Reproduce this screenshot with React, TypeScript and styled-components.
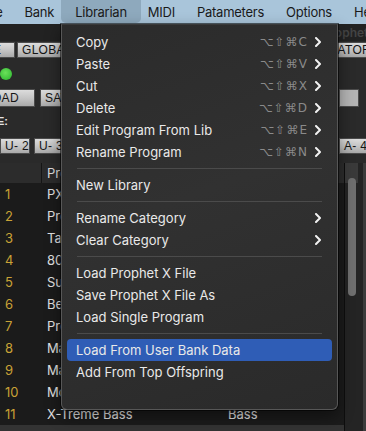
import React from "react";
import styled, { createGlobalStyle } from "styled-components";

const GlobalStyle = createGlobalStyle`
  html, body {
    margin: 0;
    padding: 0;
    background: #1b1b1b;
  }
  body {
    font-family: "Inter", "Noto Sans", "DejaVu Sans", sans-serif;
  }
`;

const Page = styled.div`
  position: relative;
  width: 366px;
  height: 431px;
  overflow: hidden;
  background: #1b1b1b;
`;

/* ---------- top menu bar ---------- */

const MenuBar = styled.div`
  display: flex;
  align-items: stretch;
  height: 24px;
  background: #a9c5da;
  white-space: nowrap;
`;

const MenuTitle = styled.div<{ $active?: boolean; $first?: boolean }>`
  display: flex;
  align-items: center;
  padding: ${(p) => (p.$active ? "0 14px" : "0 11px")};
  margin: ${(p) => (p.$active ? "0 -4px" : "0")};
  margin-left: ${(p) => (p.$first ? "-29px" : p.$active ? "-4px" : "0")};
  height: 23px;
  border-radius: 0 0 5px 5px;
  background: ${(p) => (p.$active ? "#8ea9bd" : "transparent")};
  color: #1a1a1a;
  font-size: 13px;
  letter-spacing: -0.25px;
`;

/* ---------- background editor window ---------- */

const Workspace = styled.div`
  display: flex;
  flex-direction: column;
  background: #2a2a2a;
`;

const TitleStrip = styled.div`
  height: 17px;
  display: flex;
  justify-content: flex-end;
  align-items: center;
  margin-right: -14px;
  background: #222222;
  color: #444444;
  font-size: 12px;
  font-weight: 600;
`;

const ButtonRow = styled.div<{ $h: number; $top?: number }>`
  display: flex;
  align-items: flex-start;
  gap: 2px;
  height: ${(p) => p.$h}px;
  padding-top: ${(p) => p.$top ?? 0}px;
  white-space: nowrap;
  overflow: hidden;
`;

const RightGroup = styled.div<{ $shift?: number }>`
  display: flex;
  gap: 2px;
  margin-left: auto;
  margin-right: ${(p) => p.$shift ?? 0}px;
`;

const PanelButton = styled.div<{
  $w: number;
  $h: number;
  $lead?: number;
  $flat?: boolean;
  $end?: boolean;
}>`
  flex: none;
  width: ${(p) => p.$w}px;
  height: ${(p) => p.$h}px;
  margin-left: ${(p) => p.$lead ?? 0}px;
  box-sizing: border-box;
  display: flex;
  align-items: center;
  justify-content: ${(p) => (p.$end ? "flex-end" : "flex-start")};
  padding: ${(p) => (p.$end ? "0 4px 0 0" : "0 0 0 4px")};
  border: 1px solid #4c4c4c;
  background: ${(p) =>
    p.$flat
      ? "#b4b4b4"
      : "linear-gradient(180deg, #dcdcdc 0%, #c3c3c3 55%, #a9a9a9 100%)"};
  color: #151515;
  font-family: "Liberation Sans", Arial, sans-serif;
  font-size: 12px;
  letter-spacing: 0.3px;
`;

const LedRow = styled.div`
  height: 30px;
  display: flex;
  align-items: center;
`;

const Led = styled.div`
  width: 12px;
  height: 12px;
  border-radius: 50%;
  background: radial-gradient(circle at 45% 40%, #6be05a 0%, #3cc23a 70%, #2e9e2c 100%);
`;

const FieldLabel = styled.div`
  height: 31px;
  display: flex;
  align-items: center;
  margin-left: -63px;
  padding-bottom: 4px;
  box-sizing: border-box;
  color: #e4e4e4;
  font-family: "Liberation Sans", Arial, sans-serif;
  font-size: 11px;
  font-weight: 700;
  white-space: nowrap;
`;

const TableArea = styled.div`
  margin-top: 9px;
  display: grid;
  grid-template-columns: 344px 19px 3px;
  height: 269px;
`;

const Table = styled.div`
  display: flex;
  flex-direction: column;
  background: #1b1b1b;
`;

const HeaderRow = styled.div`
  display: grid;
  grid-template-columns: 42px 186px 1fr;
  height: 20px;
  background: #2c2c2c;
  color: #dedede;
  font-size: 13px;
`;

const HeaderCell = styled.div<{ $divider?: boolean }>`
  display: flex;
  align-items: center;
  padding-left: 5px;
  border-right: ${(p) => (p.$divider ? "1px solid #151515" : "none")};
`;

const Row = styled.div`
  display: grid;
  grid-template-columns: 42px 186px 1fr;
  height: 22px;
  align-items: center;
  font-size: 13px;
  white-space: nowrap;
`;

const NumCell = styled.div`
  padding-left: 5px;
  color: #c9a236;
`;

const NameCell = styled.div`
  padding-left: 5px;
  color: #e2e2e2;
`;

const CatCell = styled.div`
  color: #e2e2e2;
`;

const BottomStrip = styled.div`
  flex: 1;
  background: #333333;
`;

const ScrollColumn = styled.div`
  display: flex;
  flex-direction: column;
  background: #242424;
  border-left: 1px solid #0e0e0e;
`;

const ScrollCorner = styled.div`
  height: 20px;
  width: 13px;
  background: #3a3a3a;
`;

const ScrollTrack = styled.div`
  flex: 1;
  padding-left: 3px;
`;

const ScrollThumb = styled.div`
  width: 8px;
  height: 118px;
  margin-top: -5px;
  border-radius: 4px;
  background: #6f6f6f;
`;

const EdgeColumn = styled.div`
  background: #3c3c3c;
`;

/* ---------- dropdown ---------- */

const Dropdown = styled.div`
  position: absolute;
  top: 24px;
  left: 61px;
  width: 277px;
  box-sizing: border-box;
  padding: 6px 5px 26px;
  border: 1px solid #575757;
  border-top-color: #3a3a3a;
  border-radius: 0 0 6px 6px;
  background: linear-gradient(160deg, #2b2b2b 0%, #313131 45%, #2a2a2a 100%);
  box-shadow: 0 0 0 1px rgba(0, 0, 0, 0.55), 0 6px 16px rgba(0, 0, 0, 0.45);
  display: flex;
  flex-direction: column;
`;

const Item = styled.div<{ $active?: boolean }>`
  height: 22px;
  display: flex;
  align-items: center;
  padding: 0 11px 0 9px;
  border-radius: 4px;
  background: ${(p) => (p.$active ? "#2f5db6" : "transparent")};
  color: #e9e9e9;
  font-size: 13px;
  white-space: nowrap;
`;

const ItemLabel = styled.span`
  flex: 1;
`;

const Shortcut = styled.span`
  color: #8a8a8a;
  font-size: 12px;
  letter-spacing: 1px;
  margin-right: 7px;
  font-family: "DejaVu Sans", "Inter", sans-serif;
`;

const Separator = styled.div`
  height: 11px;
  display: flex;
  align-items: center;
  padding: 0 10px;
  &::after {
    content: "";
    flex: 1;
    height: 1px;
    background: #4b4b4b;
  }
`;

const Chevron = () => (
  <svg width="6" height="10" viewBox="0 0 6 10">
    <polyline
      points="1,1 5,5 1,9"
      fill="none"
      stroke="#f2f2f2"
      strokeWidth="2"
      strokeLinecap="round"
      strokeLinejoin="round"
    />
  </svg>
);

type MenuEntry =
  | { sep: true }
  | { label: string; keys?: string; sub?: boolean; active?: boolean };

const entries: MenuEntry[] = [
  { label: "Copy", keys: "⌥⇧⌘C", sub: true },
  { label: "Paste", keys: "⌥⇧⌘V", sub: true },
  { label: "Cut", keys: "⌥⇧⌘X", sub: true },
  { label: "Delete", keys: "⌥⇧⌘D", sub: true },
  { label: "Edit Program From Lib", keys: "⌥⇧⌘E", sub: true },
  { label: "Rename Program", keys: "⌥⇧⌘N", sub: true },
  { sep: true },
  { label: "New Library" },
  { sep: true },
  { label: "Rename Category", sub: true },
  { label: "Clear Category", sub: true },
  { sep: true },
  { label: "Load Prophet X File" },
  { label: "Save Prophet X File As" },
  { label: "Load Single Program" },
  { sep: true },
  { label: "Load From User Bank Data", active: true },
  { label: "Add From Top Offspring" },
];

const programs = [
  ["PX Init Program", "Misc"],
  ["Prophet Strings", "Strings"],
  ["Taurus Pedals", "Bass"],
  ["80s Brass Stack", "Brass"],
  ["Sub Drone", "Bass"],
  ["Bell Garden", "Keys"],
  ["Pressure Pad", "Pad"],
  ["Mallet Dreams", "Keys"],
  ["Mad Sequence", "Seq"],
  ["Mono Lead", "Lead"],
  ["X-Treme Bass", "Bass"],
];

export default function App() {
  return (
    <Page>
      <GlobalStyle />
      <MenuBar>
        <MenuTitle $first>File</MenuTitle>
        <MenuTitle>Bank</MenuTitle>
        <MenuTitle $active>Librarian</MenuTitle>
        <MenuTitle>MIDI</MenuTitle>
        <MenuTitle>Patameters</MenuTitle>
        <MenuTitle>Options</MenuTitle>
        <MenuTitle>Help</MenuTitle>
      </MenuBar>

      <Workspace>
        <TitleStrip>Prophet X</TitleStrip>

        <ButtonRow $h={17} $top={1}>
          <PanelButton $w={56} $h={16} $lead={-41}>MODE</PanelButton>
          <PanelButton $w={60} $h={16}>GLOBAL</PanelButton>
          <PanelButton $w={60} $h={16}>SAMPLES</PanelButton>
          <RightGroup $shift={-10}>
            <PanelButton $w={90} $h={16} $end>OSCILLATOR</PanelButton>
          </RightGroup>
        </ButtonRow>

        <LedRow>
          <Led />
        </LedRow>

        <ButtonRow $h={18}>
          <PanelButton $w={55} $h={18} $lead={-20}>LOAD</PanelButton>
          <PanelButton $w={60} $h={18} $lead={3}>SAVE</PanelButton>
          <RightGroup $shift={7}>
            <PanelButton $w={20} $h={18} $flat />
          </RightGroup>
        </ButtonRow>

        <FieldLabel>BANK NAME:</FieldLabel>

        <ButtonRow $h={16}>
          <PanelButton $w={30} $h={16}>U- 2</PanelButton>
          <PanelButton $w={30} $h={16} $lead={2}>U- 3</PanelButton>
          <PanelButton $w={30} $h={16} $lead={2}>U- 4</PanelButton>
          <RightGroup $shift={-4}>
            <PanelButton $w={31} $h={16}>A- 4</PanelButton>
          </RightGroup>
        </ButtonRow>

        <TableArea>
          <Table>
            <HeaderRow>
              <HeaderCell $divider />
              <HeaderCell>Program Name</HeaderCell>
              <HeaderCell>Category</HeaderCell>
            </HeaderRow>
            {programs.map(([name, cat], i) => (
              <Row key={i}>
                <NumCell>{i + 1}</NumCell>
                <NameCell>{name}</NameCell>
                <CatCell>{cat}</CatCell>
              </Row>
            ))}
            <BottomStrip />
          </Table>
          <ScrollColumn>
            <ScrollCorner />
            <ScrollTrack>
              <ScrollThumb />
            </ScrollTrack>
          </ScrollColumn>
          <EdgeColumn />
        </TableArea>
      </Workspace>

      <Dropdown>
        {entries.map((e, i) =>
          "sep" in e ? (
            <Separator key={i} />
          ) : (
            <Item key={i} $active={e.active}>
              <ItemLabel>{e.label}</ItemLabel>
              {e.keys && <Shortcut>{e.keys}</Shortcut>}
              {e.sub && <Chevron />}
            </Item>
          )
        )}
      </Dropdown>
    </Page>
  );
}
